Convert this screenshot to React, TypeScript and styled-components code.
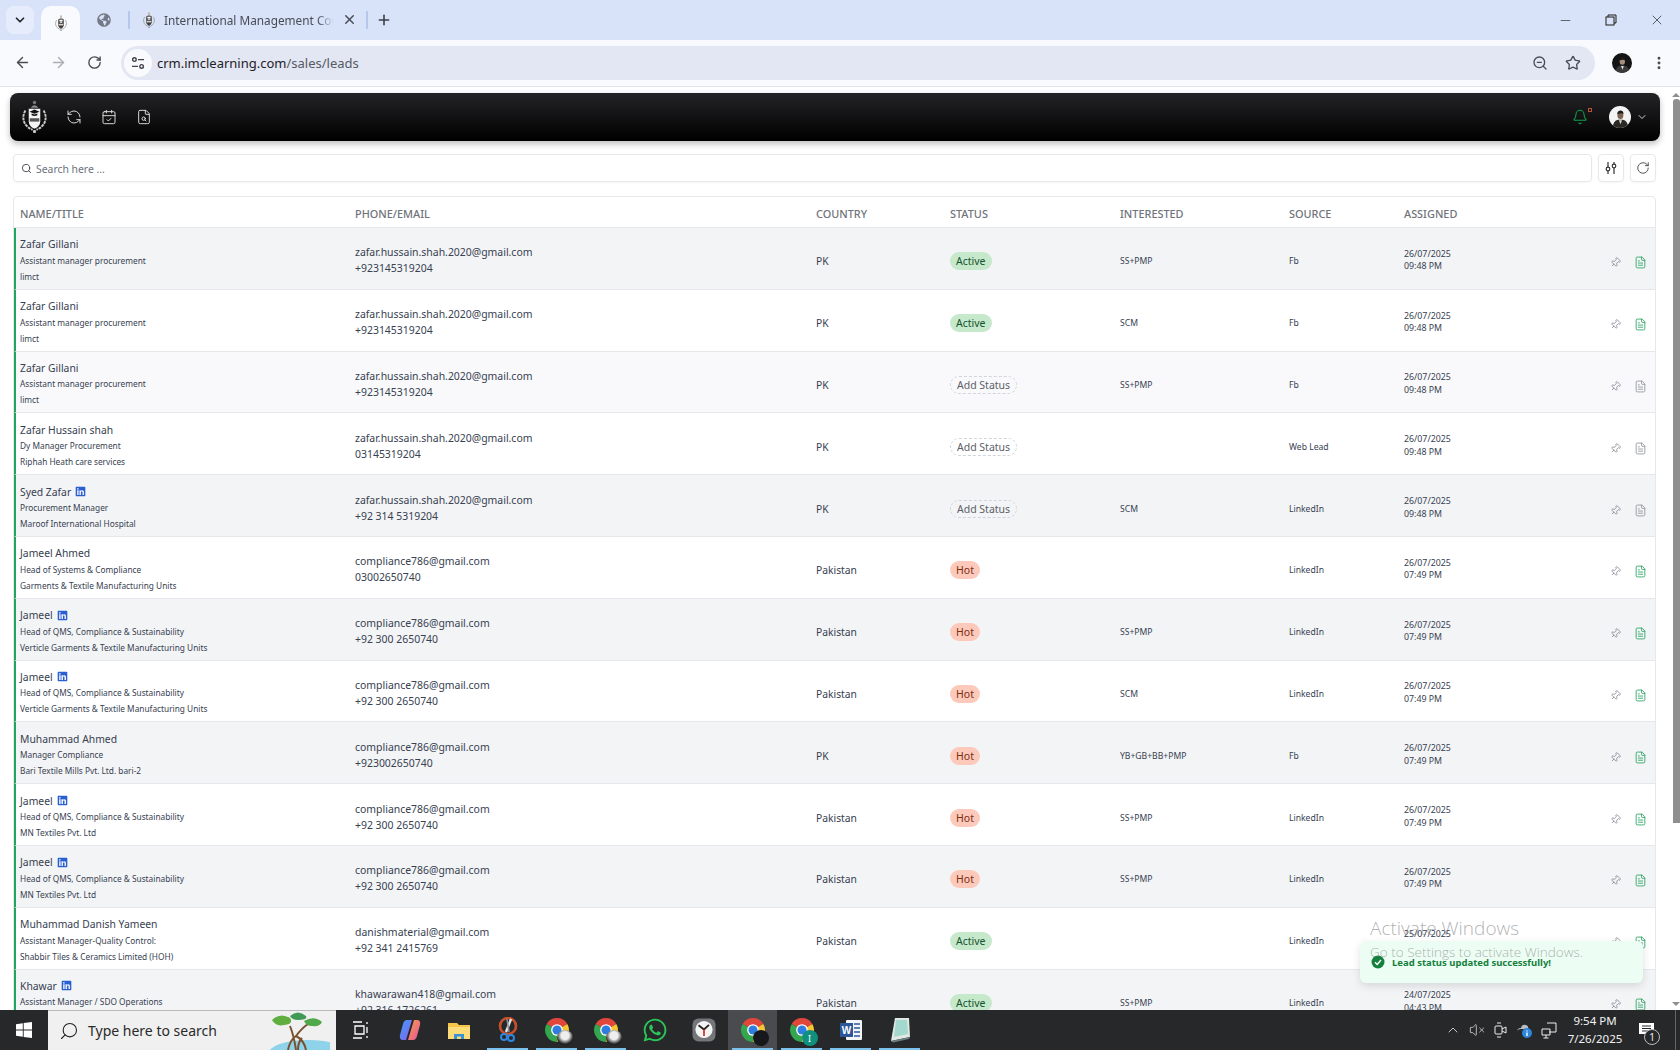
// App.tsx
import styled, { createGlobalStyle } from "styled-components";
import {
  ArrowLeft,
  ArrowRight,
  Bell,
  CalendarCheck,
  ChevronDown,
  ChevronUp,
  FileSearch,
  FileText,
  Minus,
  MoreVertical,
  Pin,
  Plus,
  RefreshCcw,
  RotateCw,
  Search,
  Star,
  VolumeX,
  X,
  ZoomOut,
} from "lucide-react";
import { FaGlobeAmericas, FaLinkedin, FaWhatsapp } from "react-icons/fa";

interface Lead {
  name: string;
  linkedin?: boolean;
  title: string;
  company: string;
  email: string;
  phone: string;
  country: string;
  status: "Active" | "Hot" | "Add Status";
  interested: string;
  source: string;
  date: string;
  time: string;
  noted: boolean;
  tint: "gray" | "white" | "pale";
}

const zafar = {
  name: "Zafar Gillani",
  title: "Assistant manager procurement",
  company: "limct",
  email: "zafar.hussain.shah.2020@gmail.com",
  phone: "+923145319204",
  country: "PK",
  date: "26/07/2025",
  time: "09:48 PM",
};

const jameel = {
  name: "Jameel",
  linkedin: true,
  title: "Head of QMS, Compliance & Sustainability",
  email: "compliance786@gmail.com",
  phone: "+92 300 2650740",
  country: "Pakistan",
  status: "Hot" as const,
  source: "LinkedIn",
  date: "26/07/2025",
  time: "07:49 PM",
  noted: true,
};

const leads: Lead[] = [
  { ...zafar, status: "Active", interested: "SS+PMP", source: "Fb", noted: true, tint: "gray" },
  { ...zafar, status: "Active", interested: "SCM", source: "Fb", noted: true, tint: "white" },
  { ...zafar, status: "Add Status", interested: "SS+PMP", source: "Fb", noted: false, tint: "pale" },
  {
    ...zafar,
    name: "Zafar Hussain shah",
    title: "Dy Manager Procurement",
    company: "Riphah Heath care services",
    phone: "03145319204",
    status: "Add Status",
    interested: "",
    source: "Web Lead",
    noted: false,
    tint: "white",
  },
  {
    ...zafar,
    name: "Syed Zafar",
    linkedin: true,
    title: "Procurement Manager",
    company: "Maroof International Hospital",
    phone: "+92 314 5319204",
    status: "Add Status",
    interested: "SCM",
    source: "LinkedIn",
    noted: false,
    tint: "gray",
  },
  {
    ...jameel,
    name: "Jameel Ahmed",
    linkedin: false,
    title: "Head of Systems & Compliance",
    company: "Garments & Textile Manufacturing Units",
    phone: "03002650740",
    interested: "",
    tint: "white",
  },
  { ...jameel, company: "Verticle Garments & Textile Manufacturing Units", interested: "SS+PMP", tint: "gray" },
  { ...jameel, company: "Verticle Garments & Textile Manufacturing Units", interested: "SCM", tint: "white" },
  {
    ...jameel,
    name: "Muhammad Ahmed",
    linkedin: false,
    title: "Manager Compliance",
    company: "Bari Textile Mills Pvt. Ltd. bari-2",
    phone: "+923002650740",
    country: "PK",
    interested: "YB+GB+BB+PMP",
    source: "Fb",
    tint: "gray",
  },
  { ...jameel, company: "MN Textiles Pvt. Ltd", interested: "SS+PMP", tint: "white" },
  { ...jameel, company: "MN Textiles Pvt. Ltd", interested: "SS+PMP", tint: "gray" },
  {
    name: "Muhammad Danish Yameen",
    title: "Assistant Manager-Quality Control:",
    company: "Shabbir Tiles & Ceramics Limited (HOH)",
    email: "danishmaterial@gmail.com",
    phone: "+92 341 2415769",
    country: "Pakistan",
    status: "Active",
    interested: "",
    source: "LinkedIn",
    date: "25/07/2025",
    time: "05:12 PM",
    noted: true,
    tint: "white",
  },
  {
    name: "Khawar",
    linkedin: true,
    title: "Assistant Manager / SDO Operations",
    company: "Pakistan Railways",
    email: "khawarawan418@gmail.com",
    phone: "+92 316 1726261",
    country: "Pakistan",
    status: "Active",
    interested: "SS+PMP",
    source: "LinkedIn",
    date: "24/07/2025",
    time: "04:43 PM",
    noted: true,
    tint: "gray",
  },
];

function Crest({ size = 20, light = false }: { size?: number; light?: boolean }) {
  const ink = light ? "#f4f4f4" : "#3d3d3d";
  const fill = light ? "#111" : "#fff";
  const leaf = light ? "#c9c9c9" : "#8c8c8c";
  return (
    <svg width={size} height={size * 1.16} viewBox="0 0 30 35">
      <circle cx="15" cy="2.6" r="1.8" fill={light ? "#777" : "#b7a890"} />
      <path d="M11 8 Q15 2.8 19 8Z" fill={light ? "#8a8a8a" : "#8d8066"} />
      <path d="M9 9 H21 V22 Q21 27 15 30 Q9 27 9 22Z" fill={ink} />
      <path d="M9.8 12.2 L15 10 L20.2 12.2 L15 14.4Z" fill={fill} />
      <path d="M12 14 V16 Q15 17.4 18 16 V14 L15 15.2Z" fill={fill} />
      <path d="M10 19 H20 V22.5 H10Z" fill={light ? "#555" : "#d9d2c2"} />
      <path d="M5.5 11 Q1 19 6 26 Q9 29.5 13 31" fill="none" stroke={leaf} strokeWidth="2" strokeDasharray="3 0.8" />
      <path d="M24.5 11 Q29 19 24 26 Q21 29.5 17 31" fill="none" stroke={leaf} strokeWidth="2" strokeDasharray="3 0.8" />
      <rect x="13.6" y="31.4" width="2.8" height="2.8" fill={light ? "#ddd" : "#777"} />
    </svg>
  );
}

function Portrait({ size, light = false }: { size: number; light?: boolean }) {
  return (
    <svg width={size} height={size} viewBox="0 0 24 24">
      <circle cx="12" cy="12" r="12" fill={light ? "#f3f3f3" : "#141414"} />
      <clipPath id={light ? "clip-light" : "clip-dark"}>
        <circle cx="12" cy="12" r="12" />
      </clipPath>
      <g clipPath={`url(#${light ? "clip-light" : "clip-dark"})`}>
        <path d="M4 25 Q4 16 10 15 L15 15 Q21 16 21 25Z" fill={light ? "#2b2823" : "#3a3a3a"} />
        <path d="M10.8 15.5 L12.6 20 L14.2 15.5Z" fill="#d9d9d9" />
        <ellipse cx="12.4" cy="10" rx="3.2" ry="4.2" fill={light ? "#7c6250" : "#a48f7d"} />
        <path d="M9 9 Q9 4.8 12.6 4.8 Q16 4.8 15.8 9 Q14 7 9 9Z" fill="#1d1a18" />
      </g>
    </svg>
  );
}

function ChromeLogo({ size = 26, badge }: { size?: number; badge?: "cat" | "dark" | "teal" }) {
  return (
    <IconStack>
      <svg width={size} height={size} viewBox="0 0 24 24">
        <path d="M12 12 L2.47 6.5 A11 11 0 0 1 21.53 6.5Z" fill="#e0463c" />
        <path d="M12 12 L21.53 6.5 A11 11 0 0 1 12 23Z" fill="#f6c531" />
        <path d="M12 12 L12 23 A11 11 0 0 1 2.47 6.5Z" fill="#35a650" />
        <circle cx="12" cy="12" r="5.4" fill="#fff" />
        <circle cx="12" cy="12" r="4.2" fill="#2f7de1" />
      </svg>
      {badge && <ChromeBadge $kind={badge}>{badge === "teal" ? "I" : ""}</ChromeBadge>}
    </IconStack>
  );
}

function Mangrove() {
  return (
    <svg width="66" height="38" viewBox="0 0 66 38">
      <ellipse cx="44" cy="42" rx="40" ry="14" fill="#8ed3ea" />
      <path d="M32 38 Q30 24 26 14 M32 24 Q38 16 44 12 M24 38 Q26 28 32 24 Q40 28 42 38 M34 38 Q34 30 38 26" fill="none" stroke="#7a5230" strokeWidth="2" />
      <path d="M8 8 Q16 0 26 6 Q30 12 20 13 Q12 15 8 8Z" fill="#5fae3f" />
      <path d="M26 4 Q34 -3 42 4 Q44 8 34 8 Q28 8 26 4Z" fill="#3f9a54" />
      <path d="M40 9 Q50 3 58 10 Q56 15 48 14 Q42 14 40 9Z" fill="#4fa84a" />
    </svg>
  );
}

function App() {
  return (
    <Screen>
      <GlobalStyle />
      <TabStrip>
        <TabMenu>
          <ChevronDown size={14} strokeWidth={3} />
        </TabMenu>
        <ActiveTab>
          <Crest size={14} />
        </ActiveTab>
        <PinnedTab>
          <FaGlobeAmericas size={14} color="#747a85" />
        </PinnedTab>
        <TabDivider />
        <OpenTab>
          <Crest size={14} />
          <TabTitle>International Management Con</TabTitle>
          <X size={15} strokeWidth={2.4} color="#4a4f59" />
        </OpenTab>
        <TabDivider />
        <NewTab>
          <Plus size={16} strokeWidth={2.4} />
        </NewTab>
        <WindowControls>
          <WindowButton>
            <Minus size={15} strokeWidth={1} />
          </WindowButton>
          <WindowButton>
            <svg width="12" height="12" viewBox="0 0 12 12" fill="none" stroke="#1c1c1c">
              <rect x="1" y="3" width="8" height="8" />
              <path d="M3 3V1H11V9H9" />
            </svg>
          </WindowButton>
          <WindowButton>
            <X size={16} strokeWidth={1} />
          </WindowButton>
        </WindowControls>
      </TabStrip>

      <Toolbar>
        <NavIcon>
          <ArrowLeft size={17} strokeWidth={2} color="#474c55" />
        </NavIcon>
        <NavIcon>
          <ArrowRight size={17} strokeWidth={2} color="#a9adb5" />
        </NavIcon>
        <NavIcon>
          <RotateCw size={15} strokeWidth={2.2} color="#474c55" />
        </NavIcon>
        <AddressBar>
          <SiteInfo>
            <svg width="14" height="14" viewBox="0 0 14 14" fill="none" stroke="#3f444d" strokeWidth="1.4">
              <circle cx="3.4" cy="3.6" r="1.8" />
              <path d="M7 3.6H13M1 10.4H7" />
              <circle cx="10.6" cy="10.4" r="1.8" />
            </svg>
          </SiteInfo>
          <Url>
            crm.imclearning.com<UrlPath>/sales/leads</UrlPath>
          </Url>
          <AddressActions>
            <ZoomOut size={16} strokeWidth={2} color="#474c55" />
            <Star size={16} strokeWidth={2} color="#474c55" />
          </AddressActions>
        </AddressBar>
        <ProfileSlot>
          <Portrait size={20} />
        </ProfileSlot>
        <MoreVertical size={16} strokeWidth={2.4} color="#474c55" />
      </Toolbar>

      <Viewport>
        <Page>
          <TopBar>
            <TopBarLeft>
              <LogoSlot>
                <Crest size={29} light />
              </LogoSlot>
              <TopIcon>
                <RefreshCcw size={16} strokeWidth={1.4} />
              </TopIcon>
              <TopIcon>
                <CalendarCheck size={16} strokeWidth={1.4} />
              </TopIcon>
              <TopIcon>
                <FileSearch size={16} strokeWidth={1.4} />
              </TopIcon>
            </TopBarLeft>
            <TopBarRight>
              <BellWrap>
                <Bell size={16} strokeWidth={1.6} color="#12a14b" />
                <BellDot />
              </BellWrap>
              <Portrait size={22} light />
              <ChevronDown size={12} strokeWidth={2} color="#d0d0d0" />
            </TopBarRight>
          </TopBar>

          <SearchRow>
            <SearchField>
              <Search size={11} strokeWidth={2} color="#3f444d" />
              <SearchHint>Search here ...</SearchHint>
            </SearchField>
            <SquareButton>
              <svg width="14" height="14" viewBox="0 0 14 14" fill="none" stroke="#333" strokeWidth="1.2">
                <path d="M4 1V6M4 10V13M10 1V3M10 7V13" />
                <circle cx="4" cy="8" r="1.8" />
                <circle cx="10" cy="5" r="1.8" />
              </svg>
            </SquareButton>
            <SquareButton>
              <RotateCw size={14} strokeWidth={1.4} color="#333" />
            </SquareButton>
          </SearchRow>

          <LeadTable>
            <HeaderRow>
              <HeaderCell>NAME/TITLE</HeaderCell>
              <HeaderCell>PHONE/EMAIL</HeaderCell>
              <HeaderCell>COUNTRY</HeaderCell>
              <HeaderCell>STATUS</HeaderCell>
              <HeaderCell>INTERESTED</HeaderCell>
              <HeaderCell>SOURCE</HeaderCell>
              <HeaderCell>ASSIGNED</HeaderCell>
            </HeaderRow>
            {leads.map((lead, i) => (
              <LeadRow key={i} $tint={lead.tint}>
                <Stack>
                  <LeadName>
                    {lead.name}
                    {lead.linkedin && <FaLinkedin size={11} color="#2a5fd1" />}
                  </LeadName>
                  <SmallLine>{lead.title}</SmallLine>
                  <SmallLine>{lead.company}</SmallLine>
                </Stack>
                <Stack>
                  <ContactLine>{lead.email}</ContactLine>
                  <ContactLine>{lead.phone}</ContactLine>
                </Stack>
                <PlainCell>{lead.country}</PlainCell>
                <StatusCell>
                  <StatusBadge $status={lead.status}>{lead.status}</StatusBadge>
                </StatusCell>
                <TinyCell>{lead.interested}</TinyCell>
                <TinyCell>{lead.source}</TinyCell>
                <DateCell>
                  <span>{lead.date}</span>
                  <span>{lead.time}</span>
                </DateCell>
                <Actions>
                  <PinIcon size={11} strokeWidth={1.4} />
                  <FileText size={13} strokeWidth={1.5} color={lead.noted ? "#1e9e5a" : "#8b8f97"} />
                </Actions>
              </LeadRow>
            ))}
          </LeadTable>
        </Page>
        <Scrollbar>
          <ScrollArrow $flip />
          <ScrollThumb />
          <ScrollSpacer />
          <ScrollArrow />
        </Scrollbar>
      </Viewport>

      <Toast>
        <svg width="14" height="14" viewBox="0 0 14 14">
          <circle cx="7" cy="7" r="6.5" fill="#15803d" />
          <path d="M4 7.2L6.2 9.4L10 5" fill="none" stroke="#fff" strokeWidth="1.4" />
        </svg>
        <ToastText>Lead status updated successfully!</ToastText>
      </Toast>
      <Watermark>
        <WatermarkTitle>Activate Windows</WatermarkTitle>
        <WatermarkHint>Go to Settings to activate Windows.</WatermarkHint>
      </Watermark>

      <Taskbar>
        <StartButton>
          <svg width="16" height="16" viewBox="0 0 16 16" fill="#fff">
            <path d="M0 2.2L6.8 1.2V7.5H0ZM7.7 1.1L16 0V7.5H7.7ZM0 8.4H6.8V14.8L0 13.8ZM7.7 8.4H16V16L7.7 14.9Z" />
          </svg>
        </StartButton>
        <TaskSearch>
          <MirrorSearch size={20} strokeWidth={1.3} color="#222" />
          <TaskSearchText>Type here to search</TaskSearchText>
          <MangroveSlot>
            <Mangrove />
          </MangroveSlot>
        </TaskSearch>
        <TaskIcons>
          <TaskItem>
            <svg width="18" height="18" viewBox="0 0 18 18" fill="none" stroke="#fff" strokeWidth="1.3">
              <path d="M1 1H10M1 17H10M3 5H12V13H3ZM15 1V3M15 6V12M15 15V17" />
            </svg>
          </TaskItem>
          <TaskItem>
            <svg width="24" height="24" viewBox="0 0 24 24">
              <defs>
                <linearGradient id="copilot-a" x1="0" y1="0" x2="1" y2="1">
                  <stop offset="0" stopColor="#3ea0f5" />
                  <stop offset="1" stopColor="#8a5cf0" />
                </linearGradient>
                <linearGradient id="copilot-b" x1="0" y1="0" x2="1" y2="1">
                  <stop offset="0" stopColor="#f5a33c" />
                  <stop offset="1" stopColor="#e84fa5" />
                </linearGradient>
              </defs>
              <path d="M9 2H14L8 22H5Q1 22 2 17L5 6Q6 2 9 2Z" fill="url(#copilot-a)" />
              <path d="M15 22H10L16 2H19Q23 2 22 7L19 18Q18 22 15 22Z" fill="url(#copilot-b)" />
            </svg>
          </TaskItem>
          <TaskItem>
            <svg width="24" height="24" viewBox="0 0 24 24">
              <path d="M1 5H10L12 7H23V21H1Z" fill="#f4c548" />
              <path d="M1 9H23V21H1Z" fill="#fbdc78" />
              <path d="M7 16H17V21H14V18.5H10V21H7Z" fill="#3d8fd6" />
            </svg>
          </TaskItem>
          <TaskItem $open>
            <svg width="24" height="26" viewBox="0 0 24 26">
              <circle cx="12" cy="9" r="8" fill="none" stroke="#c8502c" strokeWidth="2.6" />
              <path d="M15 2L10 15" stroke="#e8e8e8" strokeWidth="2.4" />
              <path d="M11 2L13 15" stroke="#8b8f97" strokeWidth="1.6" />
              <circle cx="8" cy="20" r="3" fill="none" stroke="#2f86dd" strokeWidth="2" />
              <circle cx="15" cy="21" r="3" fill="none" stroke="#2f86dd" strokeWidth="2" />
            </svg>
          </TaskItem>
          <TaskItem $open>
            <ChromeLogo badge="cat" />
          </TaskItem>
          <TaskItem $open>
            <ChromeLogo badge="cat" />
          </TaskItem>
          <TaskItem>
            <FaWhatsapp size={26} color="#2bc658" />
          </TaskItem>
          <TaskItem>
            <svg width="24" height="24" viewBox="0 0 24 24">
              <rect x="0.5" y="0.5" width="23" height="23" rx="6" fill="#74767a" />
              <circle cx="12" cy="11.5" r="8.6" fill="#f4f4f4" />
              <path d="M6.5 7.2L12 11.5L17 6.8" fill="none" stroke="#222" strokeWidth="1.8" />
              <path d="M12 11.5V18" stroke="#d43b2c" strokeWidth="1.8" />
            </svg>
          </TaskItem>
          <TaskItem $open $active>
            <ChromeLogo badge="dark" />
          </TaskItem>
          <TaskItem $open>
            <ChromeLogo badge="teal" />
          </TaskItem>
          <TaskItem $open>
            <svg width="24" height="24" viewBox="0 0 24 24">
              <rect x="7" y="2" width="16" height="20" rx="1" fill="#f2f4f8" />
              <path d="M15 6H21M15 10H21M15 14H21M15 18H21" stroke="#2b579a" strokeWidth="1.6" />
              <rect x="1" y="5" width="13" height="14" fill="#2b579a" />
              <WordLetter x="7.5" y="16" textAnchor="middle">
                W
              </WordLetter>
            </svg>
          </TaskItem>
          <TaskItem $open>
            <svg width="24" height="26" viewBox="0 0 24 26">
              <path d="M7 1H21L22 20L3 24Z" fill="#dfe8e2" />
              <path d="M8 3H19L20 17L6 20Z" fill="#a4d8cf" />
              <path d="M3 24L22 20L21 22L5 25.5Z" fill="#6c7d84" />
            </svg>
          </TaskItem>
        </TaskIcons>
        <Tray>
          <ChevronUp size={16} strokeWidth={1.2} />
          <VolumeX size={16} strokeWidth={1.1} />
          <svg width="14" height="18" viewBox="0 0 14 18" fill="none" stroke="#eee" strokeWidth="1">
            <rect x="2" y="5" width="7" height="8" rx="1" />
            <path d="M9 8L13 6V12L9 10M4 2H8M4 16H8" />
          </svg>
          <svg width="18" height="18" viewBox="0 0 18 18">
            <path d="M2 11Q2 7 6 7Q7 3 11 4Q14 5 13 8H6Q2 8 2 11Z" fill="#b9bcc2" />
            <circle cx="12" cy="12" r="5" fill="#2f86dd" />
            <path d="M12 9.5V10.5M12 11.5V15" stroke="#fff" strokeWidth="1.4" />
          </svg>
          <svg width="17" height="17" viewBox="0 0 17 17" fill="none" stroke="#eee" strokeWidth="1">
            <path d="M6 1H15V10H8M1 7H9V13H1ZM5 13V16M2.5 16H7.5" />
          </svg>
          <Clock>
            <span>9:54 PM</span>
            <span>7/26/2025</span>
          </Clock>
          <ActionCenter>
            <svg width="17" height="16" viewBox="0 0 17 16" fill="#fff">
              <path d="M1 1H16V12H11L9 15V12H1Z" />
              <path d="M4 4H13M4 6.5H13M4 9H13" stroke="#272729" strokeWidth="1" />
            </svg>
            <CountBadge>1</CountBadge>
          </ActionCenter>
          <ShowDesktop />
        </Tray>
      </Taskbar>
    </Screen>
  );
}

const GlobalStyle = createGlobalStyle`
  html, body, #root {
    margin: 0;
    height: 100%;
  }
  body {
    font-family: "Noto Sans", "Open Sans", sans-serif;
    overflow: hidden;
  }
  * {
    box-sizing: border-box;
  }
`;

const Screen = styled.div`
  position: relative;
  height: 1050px;
  display: flex;
  flex-direction: column;
  background: #fff;
  overflow: hidden;
`;

const TabStrip = styled.div`
  height: 40px;
  flex: none;
  display: flex;
  align-items: center;
  padding-left: 6px;
  background: #d8e2f8;
`;

const TabMenu = styled.div`
  width: 28px;
  height: 28px;
  display: flex;
  align-items: center;
  justify-content: center;
  border-radius: 8px;
  background: #e6ecfb;
  color: #24272e;
`;

const ActiveTab = styled.div`
  width: 39px;
  height: 34px;
  margin: 6px 0 0 7px;
  display: flex;
  align-items: center;
  justify-content: center;
  border-radius: 10px 10px 0 0;
  background: #f8fafd;
`;

const PinnedTab = styled.div`
  width: 48px;
  display: flex;
  justify-content: center;
`;

const TabDivider = styled.div`
  width: 2px;
  height: 18px;
  background: #b5c8ec;
`;

const OpenTab = styled.div`
  width: 236px;
  display: flex;
  align-items: center;
  padding-left: 12px;
  gap: 8px;
  color: #4a4f59;
`;

const TabTitle = styled.span`
  width: 170px;
  white-space: nowrap;
  font-size: 11.8px;
  color: #474c55;
  mask-image: linear-gradient(90deg, #000 90%, transparent);
`;

const NewTab = styled.div`
  width: 31px;
  display: flex;
  justify-content: center;
  color: #3a3f48;
`;

const WindowControls = styled.div`
  margin-left: auto;
  display: flex;
`;

const WindowButton = styled.div`
  width: 46px;
  height: 40px;
  display: flex;
  align-items: center;
  justify-content: center;
  color: #1c1c1c;
`;

const Toolbar = styled.div`
  height: 47px;
  flex: none;
  display: flex;
  align-items: center;
  padding: 0 13px 1px 5px;
  background: #f8fafd;
  border-bottom: 1px solid #dfe3ea;
`;

const NavIcon = styled.div`
  width: 36px;
  display: flex;
  justify-content: center;
`;

const AddressBar = styled.div`
  width: 1475px;
  height: 34px;
  margin-left: 8px;
  display: flex;
  align-items: center;
  border-radius: 17px;
  background: #e3e7f3;
`;

const SiteInfo = styled.div`
  width: 28px;
  height: 28px;
  margin-left: 3px;
  display: flex;
  align-items: center;
  justify-content: center;
  border-radius: 50%;
  background: #f8fafd;
`;

const Url = styled.span`
  margin-left: 5px;
  font-size: 13px;
  color: #1f2126;
`;

const UrlPath = styled.span`
  color: #555a63;
`;

const AddressActions = styled.div`
  margin-left: auto;
  margin-right: 14px;
  display: flex;
  gap: 17px;
  align-items: center;
`;

const ProfileSlot = styled.div`
  width: 20px;
  margin: 0 19px 0 17px;
  display: flex;
`;

const Viewport = styled.div`
  flex: 1;
  min-height: 0;
  display: flex;
  overflow: hidden;
`;

const Page = styled.div`
  flex: 1;
  min-width: 0;
  padding: 6px 5px 0 10px;
`;

const TopBar = styled.div`
  height: 48px;
  display: flex;
  align-items: center;
  justify-content: space-between;
  border-radius: 8px;
  color: #e4e4e4;
  background: linear-gradient(180deg, #242427 0%, #000 100%);
  box-shadow: 0 3px 6px rgba(0, 0, 0, 0.25);
`;

const TopBarLeft = styled.div`
  display: flex;
  align-items: center;
  padding-left: 10px;
`;

const LogoSlot = styled.div`
  width: 29px;
  display: flex;
  margin-right: 7px;
`;

const TopIcon = styled.div`
  width: 35px;
  display: flex;
  justify-content: center;
`;

const TopBarRight = styled.div`
  display: flex;
  align-items: center;
  gap: 5px;
  padding-right: 12px;
`;

const BellWrap = styled.div`
  position: relative;
  display: flex;
  margin-right: 16px;
`;

const BellDot = styled.span`
  position: absolute;
  top: -1px;
  right: -4px;
  width: 4px;
  height: 4px;
  border: 1px solid #b5532f;
`;

const SearchRow = styled.div`
  margin: 13px 4px 0 3px;
  display: flex;
  gap: 6px;
`;

const SearchField = styled.div`
  flex: 1;
  height: 28px;
  display: flex;
  align-items: center;
  gap: 4px;
  padding-left: 7px;
  border: 1px solid #e7e8ec;
  border-radius: 4px;
  box-shadow: 0 1px 2px rgba(0, 0, 0, 0.04);
`;

const SearchHint = styled.span`
  padding-top: 1px;
  font-size: 10.4px;
  color: #6b7280;
`;

const SquareButton = styled.div`
  width: 26px;
  height: 28px;
  display: flex;
  align-items: center;
  justify-content: center;
  border: 1px solid #e7e8ec;
  border-radius: 4px;
  box-shadow: 0 1px 2px rgba(0, 0, 0, 0.04);
`;

const LeadTable = styled.div`
  margin: 14px 4px 0 3px;
  border: 1px solid #e7e8ec;
  border-radius: 4px 4px 0 0;
`;

const gridColumns = "335px 461px 134px 170px 169px 115px 1fr 70px";

const HeaderRow = styled.div`
  height: 31px;
  display: grid;
  grid-template-columns: ${gridColumns};
  align-items: center;
  padding: 2px 0 0 6px;
  border-bottom: 1px solid #e5e7eb;
`;

const HeaderCell = styled.div`
  font-size: 10.9px;
  font-weight: 500;
  color: #6f737b;
`;

const tints = { gray: "#f3f4f6", white: "#ffffff", pale: "#f9f9fb" };

const LeadRow = styled.div<{ $tint: Lead["tint"] }>`
  height: 61.8px;
  display: grid;
  grid-template-columns: ${gridColumns};
  align-items: center;
  padding: 4px 0 0 4px;
  border-left: 2px solid #22a35f;
  border-bottom: 1px solid #e5e7eb;
  background: ${({ $tint }) => tints[$tint]};
`;

const Stack = styled.div`
  display: flex;
  flex-direction: column;
  white-space: nowrap;
`;

const LeadName = styled.div`
  height: 17px;
  display: flex;
  align-items: center;
  gap: 4px;
  font-size: 10.35px;
  color: #374151;
`;

const SmallLine = styled.div`
  height: 16px;
  line-height: 16px;
  font-size: 8.3px;
  color: #374151;
`;

const ContactLine = styled.div`
  height: 16px;
  line-height: 16px;
  font-size: 10.45px;
  color: #374151;
`;

const PlainCell = styled.div`
  padding-top: 2px;
  font-size: 10.3px;
  color: #374151;
`;

const StatusCell = styled.div`
  margin-bottom: 2px;
`;

const TinyCell = styled.div`
  padding-top: 2px;
  font-size: 8.6px;
  color: #374151;
`;

const DateCell = styled.div`
  display: flex;
  flex-direction: column;
  line-height: 12.5px;
  font-size: 8.8px;
  color: #374151;
`;

const badgeColors = {
  Active: "background: #c6e8cb; color: #14532d;",
  Hot: "background: #fcc9ba; color: #7c2d12;",
  "Add Status": "background: transparent; color: #5b6068; border: 1px dashed #d1d5db;",
};

const StatusBadge = styled.span<{ $status: Lead["status"] }>`
  display: inline-flex;
  align-items: center;
  height: 18px;
  padding: 0 6px;
  border-radius: 9px;
  font-size: 10.5px;
  ${({ $status }) => badgeColors[$status]}
`;

const Actions = styled.div`
  display: flex;
  justify-content: flex-end;
  align-items: center;
  gap: 13px;
  padding: 5px 8px 0 0;
`;

const PinIcon = styled(Pin)`
  color: #6b7280;
  transform: rotate(45deg);
`;

const Scrollbar = styled.div`
  width: 15px;
  flex: none;
  display: flex;
  flex-direction: column;
  align-items: flex-end;
  padding-top: 6px;
  background: #fff;
`;

const ScrollArrow = styled.div<{ $flip?: boolean }>`
  width: 8px;
  height: 0;
  border-left: 4px solid transparent;
  border-right: 4px solid transparent;
  ${({ $flip }) =>
    $flip ? "border-bottom: 4px solid #8f8f8f;" : "border-top: 4px solid #8f8f8f; margin-bottom: 4px;"}
`;

const ScrollThumb = styled.div`
  width: 7px;
  height: 724px;
  margin-top: 2px;
  border-radius: 3px 3px 0 0;
  background: #8f8f8f;
`;

const ScrollSpacer = styled.div`
  flex: 1;
`;

const Toast = styled.div`
  position: absolute;
  left: 1360px;
  top: 941px;
  width: 283px;
  height: 42px;
  display: flex;
  align-items: center;
  gap: 7px;
  padding-left: 11px;
  border-radius: 6px;
  background: #ecfdf3;
  box-shadow: 0 3px 8px rgba(0, 0, 0, 0.12);
`;

const ToastText = styled.span`
  font-size: 9.5px;
  font-weight: 700;
  color: #15803d;
`;

const Watermark = styled.div`
  position: absolute;
  left: 1370px;
  top: 914px;
  display: flex;
  flex-direction: column;
  color: rgba(110, 110, 110, 0.55);
  pointer-events: none;
  font-family: "Open Sans", sans-serif;
  font-weight: 300;
`;

const WatermarkTitle = styled.span`
  font-size: 19px;
  line-height: 28px;
`;

const WatermarkHint = styled.span`
  font-size: 13.5px;
  line-height: 20px;
`;

const Taskbar = styled.div`
  position: relative;
  z-index: 2;
  height: 40px;
  flex: none;
  display: flex;
  background: #27282a;
`;

const StartButton = styled.div`
  width: 48px;
  display: flex;
  align-items: center;
  justify-content: center;
`;

const TaskSearch = styled.div`
  position: relative;
  width: 288px;
  display: flex;
  align-items: center;
  gap: 9px;
  padding-left: 11px;
  background: #f0f0f0;
  border-top: 1px solid #b9b9b9;
`;

const MirrorSearch = styled(Search)`
  transform: scaleX(-1);
`;

const TaskSearchText = styled.span`
  font-size: 14px;
  color: #2a2a2a;
`;

const MangroveSlot = styled.div`
  position: absolute;
  right: 6px;
  bottom: 0;
  display: flex;
`;

const TaskIcons = styled.div`
  display: flex;
`;

const TaskItem = styled.div<{ $open?: boolean; $active?: boolean }>`
  position: relative;
  width: 49px;
  display: flex;
  align-items: center;
  justify-content: center;
  background: ${({ $active }) => ($active ? "#4a4b4e" : "transparent")};

  &::after {
    content: "";
    display: ${({ $open }) => ($open ? "block" : "none")};
    position: absolute;
    left: 4px;
    right: 4px;
    bottom: 0;
    height: 2px;
    background: #7cc0ee;
  }
`;

const IconStack = styled.div`
  position: relative;
  display: flex;
`;

const ChromeBadge = styled.span<{ $kind: "cat" | "dark" | "teal" }>`
  position: absolute;
  right: -3px;
  bottom: -3px;
  width: 16px;
  height: 16px;
  display: flex;
  align-items: center;
  justify-content: center;
  border-radius: 50%;
  font-size: 9px;
  color: #fff;
  background: ${({ $kind }) =>
    $kind === "cat" ? "radial-gradient(circle at 50% 35%, #eee 30%, #222 65%)" : $kind === "dark" ? "#16181b" : "#0f8f7e"};
`;

const WordLetter = styled.text`
  font-family: "Liberation Sans", sans-serif;
  font-size: 10px;
  font-weight: 700;
  fill: #fff;
`;

const Tray = styled.div`
  margin-left: auto;
  display: flex;
  align-items: center;
  gap: 8px;
  color: #eee;
`;

const Clock = styled.div`
  width: 58px;
  display: flex;
  flex-direction: column;
  align-items: center;
  white-space: nowrap;
  font-size: 11.5px;
  line-height: 18px;
  color: #f2f2f2;
`;

const ActionCenter = styled.div`
  position: relative;
  width: 28px;
  margin-right: 7px;
  display: flex;
  justify-content: center;
`;

const CountBadge = styled.span`
  position: absolute;
  right: 0;
  bottom: -7px;
  width: 16px;
  height: 16px;
  display: flex;
  align-items: center;
  justify-content: center;
  border: 1px solid #bbb;
  border-radius: 50%;
  font-size: 10px;
  color: #eee;
  background: #27282a;
`;

const ShowDesktop = styled.div`
  width: 5px;
  height: 40px;
  border-left: 1px solid #666;
`;

export default App;
